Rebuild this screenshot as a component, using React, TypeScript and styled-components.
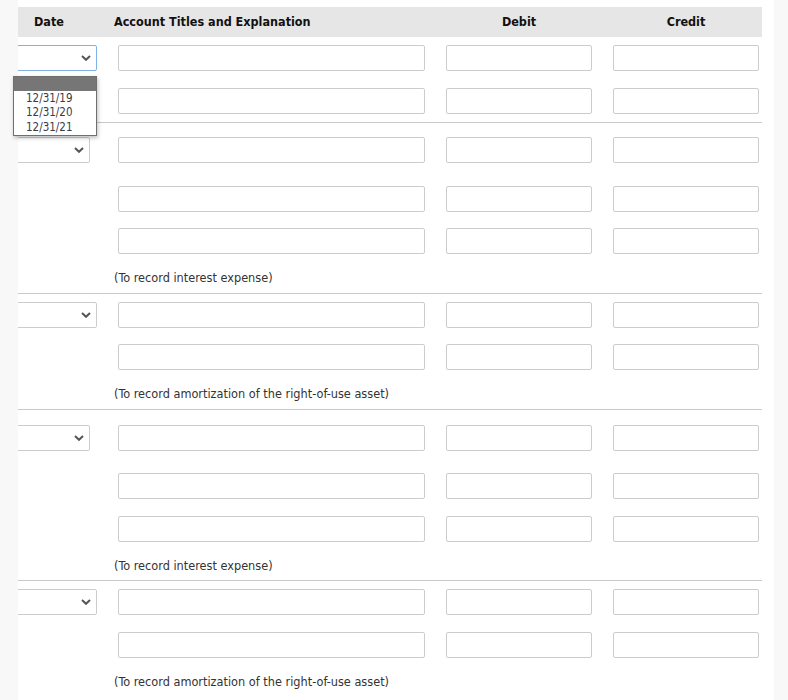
import React from "react";
import styled, { createGlobalStyle } from "styled-components";

const GlobalStyle = createGlobalStyle`
  html, body { margin: 0; padding: 0; }
  body {
    background: #f8f8f8;
    font-family: "DejaVu Sans Condensed", "DejaVu Sans", sans-serif;
  }
`;

const Page = styled.div`
  position: relative;
  min-height: 700px;
  overflow: hidden;
`;

const Panel = styled.div`
  margin-left: 18px;
  width: 756px;
  min-height: 700px;
  background: #ffffff;
  padding-top: 7px;
  box-sizing: border-box;
`;

const Table = styled.div`
  width: 744px;
  overflow: hidden;
`;

const Grid = styled.div`
  display: grid;
  grid-template-columns: 79px 307px 146px 146px;
  column-gap: 21px;
  padding-right: 3px;
  align-items: center;
`;

const HeaderRow = styled(Grid)`
  height: 30px;
  background: #e6e6e6;
`;

const HeadCell = styled.div<{ $align?: string; $shift?: number }>`
  font-weight: bold;
  font-size: 12.5px;
  line-height: 14px;
  padding-bottom: 1px;
  color: #111;
  text-align: ${(p) => p.$align || "center"};
  margin-left: ${(p) => p.$shift || 0}px;
  white-space: nowrap;
`;

const Section = styled.div<{ $last?: boolean }>`
  border-bottom: ${(p) => (p.$last ? "none" : "1px solid #c9c9c9")};
`;

const Row = styled(Grid)<{ $top?: number; $bottom?: number }>`
  padding-top: ${(p) => p.$top ?? 8}px;
  padding-bottom: ${(p) => p.$bottom ?? 8}px;
`;

const DateCell = styled.div`
  display: flex;
  justify-content: flex-end;
  overflow: hidden;
  height: 26px;
`;

const SelectBox = styled.div<{ $focus?: boolean; $narrow?: boolean }>`
  flex-shrink: 0;
  width: 110px;
  height: 26px;
  margin-right: ${(p) => (p.$narrow ? 7 : 0)}px;
  box-sizing: border-box;
  border: 1px solid ${(p) => (p.$focus ? "#7fb2e5" : "#cccccc")};
  border-radius: 2px;
  background: #fff;
  display: flex;
  align-items: center;
  justify-content: flex-end;
  padding-right: 5px;
`;

const Field = styled.div`
  height: 26px;
  box-sizing: border-box;
  border: 1px solid #cccccc;
  border-radius: 2px;
  background: #fff;
`;

const NoteRow = styled.div<{ $h?: number }>`
  height: ${(p) => p.$h ?? 31}px;
  display: flex;
  align-items: center;
  padding-left: 96px;
  font-size: 12.6px;
  color: #333;
`;

const Popup = styled.div`
  position: absolute;
  left: 13px;
  top: 76px;
  width: 84px;
  box-sizing: border-box;
  border: 1px solid #6f6f6f;
  background: #fff;
  box-shadow: 1px 2px 4px rgba(0, 0, 0, 0.25);
  padding-bottom: 1px;
`;

const PopupHead = styled.div`
  height: 14px;
  background: #767676;
`;

const Option = styled.div`
  height: 14.3px;
  line-height: 14px;
  font-size: 11.5px;
  color: #3a3a4a;
  padding-left: 12px;
`;

const Chevron = () => (
  <svg width="10" height="6" viewBox="0 0 10 6">
    <path d="M1 1 L5 4.8 L9 1" fill="none" stroke="#555" strokeWidth="2" />
  </svg>
);

type RowSpec = { date?: { narrow?: boolean; focus?: boolean }; top?: number; bottom?: number };
type SectionSpec = { rows: RowSpec[]; note?: string; noteH?: number };

const sections: SectionSpec[] = [
  { rows: [{ date: { focus: true } }, { top: 9 }] },
  {
    rows: [{ date: { narrow: true }, top: 14, bottom: 14 }, { top: 9 }, {}],
    note: "(To record interest expense)",
  },
  { rows: [{ date: {} }, {}], note: "(To record amortization of the right-of-use asset)" },
  {
    rows: [{ date: { narrow: true }, top: 15, bottom: 14 }, {}, { top: 9 }],
    note: "(To record interest expense)",
    noteH: 30,
  },
  { rows: [{ date: {} }, { top: 9 }], note: "(To record amortization of the right-of-use asset)" },
];

export default function App() {
  return (
    <Page>
      <GlobalStyle />
      <Panel>
        <Table>
          <HeaderRow>
            <HeadCell $align="left" $shift={16}>Date</HeadCell>
            <HeadCell $align="left" $shift={-4}>Account Titles and Explanation</HeadCell>
            <HeadCell>Debit</HeadCell>
            <HeadCell>Credit</HeadCell>
          </HeaderRow>
          {sections.map((s, si) => (
            <Section key={si} $last={si === sections.length - 1}>
              {s.rows.map((r, ri) => (
                <Row key={ri} $top={r.top} $bottom={r.bottom}>
                  <DateCell>
                    {r.date && (
                      <SelectBox $focus={r.date.focus} $narrow={r.date.narrow}>
                        <Chevron />
                      </SelectBox>
                    )}
                  </DateCell>
                  <Field />
                  <Field />
                  <Field />
                </Row>
              ))}
              {s.note && <NoteRow $h={s.noteH}>{s.note}</NoteRow>}
            </Section>
          ))}
        </Table>
      </Panel>
      <Popup>
        <PopupHead />
        <Option>12/31/19</Option>
        <Option>12/31/20</Option>
        <Option>12/31/21</Option>
      </Popup>
    </Page>
  );
}
